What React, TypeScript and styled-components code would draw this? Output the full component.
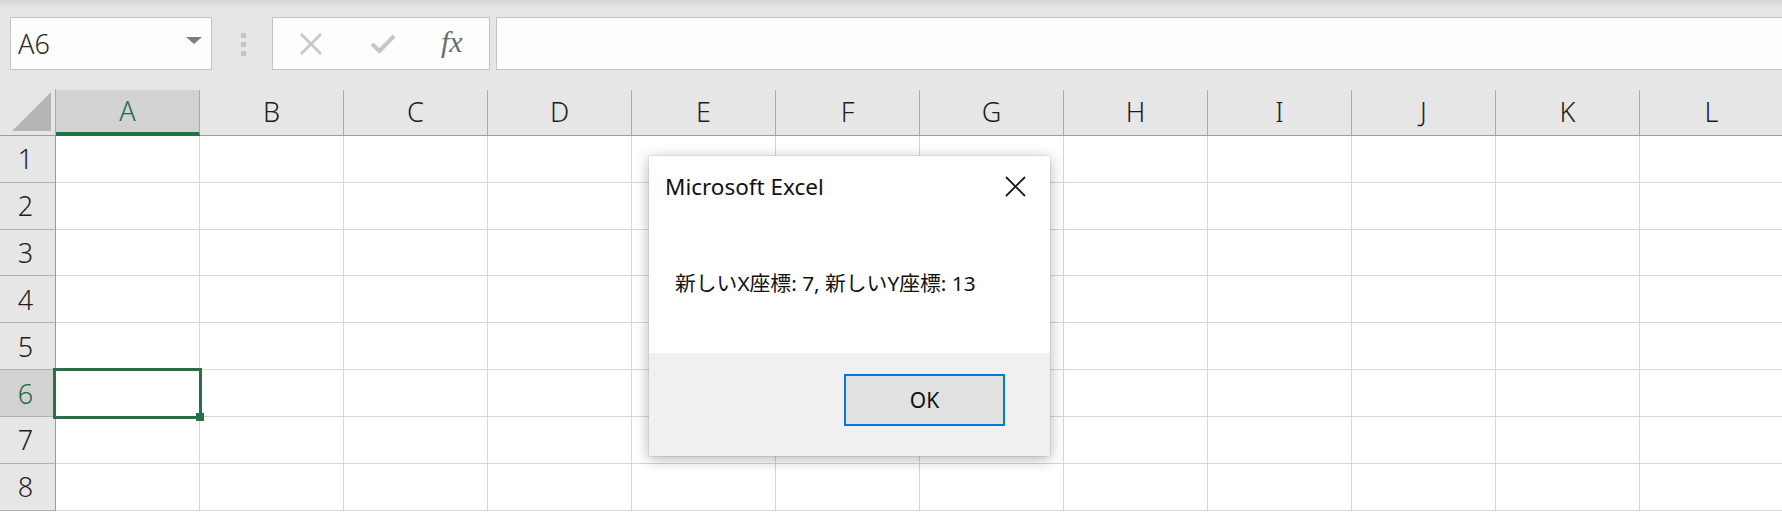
import styled, { createGlobalStyle } from 'styled-components'

const GlobalStyle = createGlobalStyle`
  html, body {
    margin: 0;
    padding: 0;
    background: #ffffff;
    overflow: hidden;
  }
  * {
    box-sizing: border-box;
  }
`

const COLS = ['A', 'B', 'C', 'D', 'E', 'F', 'G', 'H', 'I', 'J', 'K', 'L']
const ROWS = [1, 2, 3, 4, 5, 6, 7, 8]
const SELECTED_COL = 0
const SELECTED_ROW = 6

const Sheet = styled.div`
  position: relative;
  width: 1782px;
  height: 514px;
  overflow: hidden;
  font-family: 'Noto Sans', 'Noto Sans CJK JP', sans-serif;
  color: #222;
`

const Toolbar = styled.div`
  display: flex;
  align-items: flex-start;
  height: 90px;
  padding: 17px 0 0 10px;
  background: linear-gradient(#d3d3d3 0px, #e4e4e4 7px, #e6e6e6 12px);
`

const NameBox = styled.div`
  display: flex;
  align-items: center;
  justify-content: space-between;
  width: 202px;
  height: 53px;
  padding: 0 9px 0 7px;
  background: #fdfdfd;
  border: 1px solid #c4c4c4;
  font-size: 27px;
  font-weight: 300;
  color: #2b2b2b;
`

const Caret = styled.span`
  width: 0;
  height: 0;
  margin-top: -6px;
  border-left: 8px solid transparent;
  border-right: 8px solid transparent;
  border-top: 7px solid #7c7c7c;
`

const Grip = styled.div`
  display: flex;
  flex-direction: column;
  gap: 4px;
  width: 5px;
  margin: 16px 26px 0 29px;
`

const GripDot = styled.span`
  width: 5px;
  height: 5px;
  background: #c3c3c3;
`

const FormulaButtons = styled.div`
  display: flex;
  align-items: center;
  width: 218px;
  height: 53px;
  padding-left: 26px;
  gap: 47px;
  background: #fdfdfd;
  border: 1px solid #c4c4c4;
`

const Fx = styled.span`
  font-family: 'Liberation Serif', serif;
  font-style: italic;
  font-size: 30px;
  color: #6b6b6b;
  margin-left: -2px;
  margin-top: -4px;
`

const FormulaInput = styled.div`
  flex: 1;
  height: 53px;
  margin-left: 6px;
  background: #fdfdfd;
  border: 1px solid #c4c4c4;
  border-right: none;
`

const Grid = styled.div`
  display: grid;
  grid-template-columns: 56px repeat(12, 144px);
  grid-template-rows: 47px repeat(8, 46.83px);
  margin-top: -1px;
`

const Corner = styled.div`
  display: flex;
  align-items: flex-end;
  justify-content: flex-end;
  padding: 0 4px 4px 0;
  background: #e6e6e6;
  border-right: 1px solid #a8a8a8;
  border-bottom: 1px solid #9c9c9c;
`

const CornerTriangle = styled.span`
  width: 0;
  height: 0;
  border-left: 39px solid transparent;
  border-bottom: 39px solid #b5b5b5;
`

const ColHeader = styled.div<{ $active?: boolean }>`
  display: flex;
  align-items: center;
  justify-content: center;
  padding-bottom: 2px;
  font-size: 27px;
  font-weight: 300;
  background: ${p => (p.$active ? '#d2d2d2' : '#e6e6e6')};
  color: ${p => (p.$active ? '#1e6b43' : '#1e1e1e')};
  border-right: 1px solid #ababab;
  border-bottom: ${p => (p.$active ? '4px solid #217346' : '1px solid #9c9c9c')};
  background-clip: padding-box;
  margin-top: 1px;
`

const RowHeader = styled.div<{ $active?: boolean }>`
  display: flex;
  align-items: center;
  justify-content: center;
  padding-right: 4px;
  font-size: 27px;
  font-weight: 300;
  background: ${p => (p.$active ? '#d2d2d2' : '#e6e6e6')};
  color: ${p => (p.$active ? '#1e6b43' : '#1e1e1e')};
  border-right: 1px solid #9c9c9c;
  border-bottom: 1px solid #b2b2b2;
`

const Cell = styled.div`
  position: relative;
  background: #ffffff;
  border-right: 1px solid #d6d6d6;
  border-bottom: 1px solid #d6d6d6;
`

const Selection = styled.div`
  position: absolute;
  left: -3px;
  top: -2px;
  right: -3px;
  bottom: -3px;
  border: 3px solid #217346;
  z-index: 2;
`

const FillHandle = styled.span`
  position: absolute;
  right: -5px;
  bottom: -5px;
  width: 8px;
  height: 8px;
  background: #217346;
`

const Dialog = styled.div`
  position: absolute;
  left: 649px;
  top: 156px;
  width: 401px;
  height: 300px;
  display: flex;
  flex-direction: column;
  background: #f0f0f0;
  box-shadow: 0 0 1px rgba(0, 0, 0, 0.35), 0 3px 14px rgba(0, 0, 0, 0.3);
  z-index: 10;
`

const DialogBody = styled.div`
  display: flex;
  flex-direction: column;
  height: 197px;
  background: #ffffff;
`

const TitleBar = styled.div`
  display: flex;
  align-items: center;
  justify-content: space-between;
  height: 60px;
  padding: 0 24px 0 16px;
`

const Title = styled.span`
  font-size: 22.5px;
  color: #111;
`

const Message = styled.div`
  flex: 1;
  display: flex;
  align-items: center;
  padding: 0 0 6px 26px;
  font-size: 20.8px;
  color: #111;
`

const Footer = styled.div`
  display: flex;
  justify-content: flex-end;
  padding: 21px 45px 0 0;
`

const OkButton = styled.button`
  width: 161px;
  height: 52px;
  background: #e1e1e1;
  border: 2px solid #0078d7;
  font-family: 'Noto Sans', sans-serif;
  font-size: 21px;
  color: #111;
  padding: 0;
`

function CancelIcon () {
  return (
    <svg width='24' height='24' viewBox='0 0 24 24'>
      <path d='M2 2 L22 22 M22 2 L2 22' stroke='#c6c6c6' strokeWidth='2.6' fill='none' />
    </svg>
  )
}

function EnterIcon () {
  return (
    <svg width='26' height='20' viewBox='0 0 26 20'>
      <path d='M2 10 L9.5 17 L24 2' stroke='#c6c6c6' strokeWidth='4' fill='none' />
    </svg>
  )
}

function CloseIcon () {
  return (
    <svg width='21' height='21' viewBox='0 0 21 21'>
      <path d='M1 1 L20 20 M20 1 L1 20' stroke='#1a1a1a' strokeWidth='1.8' fill='none' />
    </svg>
  )
}

function App () {
  return (
    <Sheet>
      <GlobalStyle />
      <Toolbar>
        <NameBox>
          A6
          <Caret />
        </NameBox>
        <Grip>
          <GripDot />
          <GripDot />
          <GripDot />
        </Grip>
        <FormulaButtons>
          <CancelIcon />
          <EnterIcon />
          <Fx>fx</Fx>
        </FormulaButtons>
        <FormulaInput />
      </Toolbar>

      <Grid>
        <Corner>
          <CornerTriangle />
        </Corner>
        {COLS.map((col, i) => (
          <ColHeader key={col} $active={i === SELECTED_COL}>
            {col}
          </ColHeader>
        ))}
        {ROWS.map(row => [
          <RowHeader key={`h${row}`} $active={row === SELECTED_ROW}>
            {row}
          </RowHeader>,
          ...COLS.map((col, i) => (
            <Cell key={`${col}${row}`}>
              {row === SELECTED_ROW && i === SELECTED_COL && (
                <Selection>
                  <FillHandle />
                </Selection>
              )}
            </Cell>
          ))
        ])}
      </Grid>

      <Dialog>
        <DialogBody>
          <TitleBar>
            <Title>Microsoft Excel</Title>
            <CloseIcon />
          </TitleBar>
          <Message>新しいX座標: 7, 新しいY座標: 13</Message>
        </DialogBody>
        <Footer>
          <OkButton>OK</OkButton>
        </Footer>
      </Dialog>
    </Sheet>
  )
}

export default App
